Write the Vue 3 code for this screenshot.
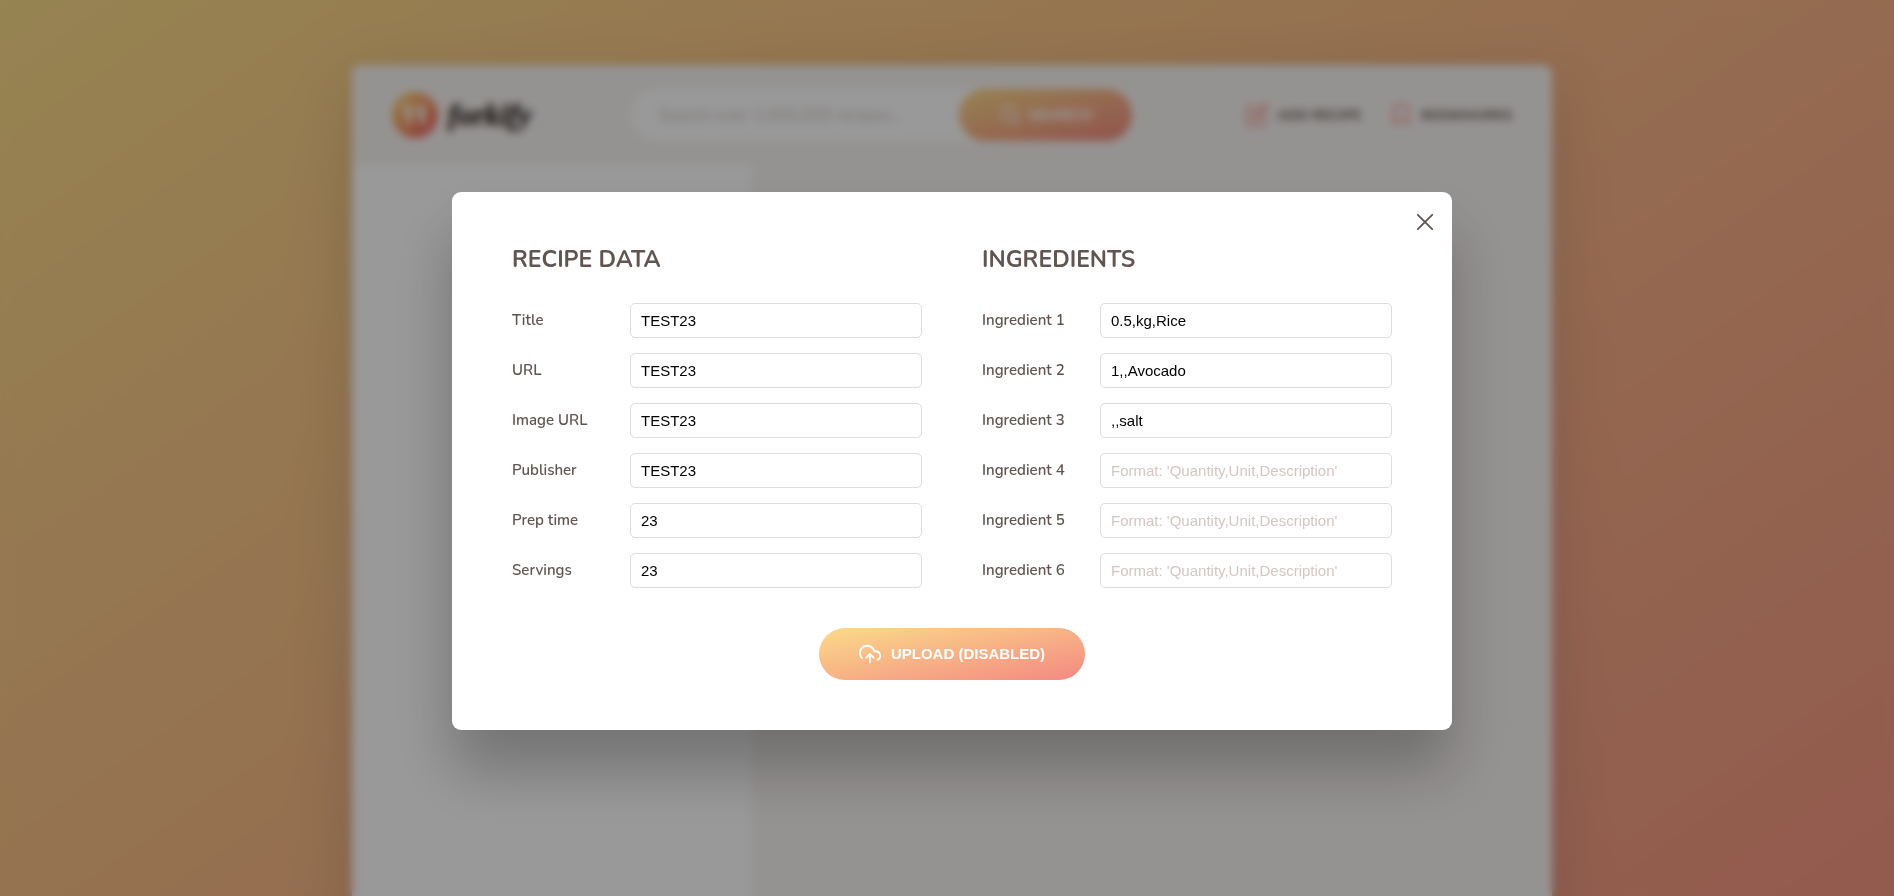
<script setup>
import { reactive, ref } from 'vue'

const query = ref('')

const recipeFields = reactive([
  { id: 'title', label: 'Title', value: 'TEST23' },
  { id: 'source-url', label: 'URL', value: 'TEST23' },
  { id: 'image', label: 'Image URL', value: 'TEST23' },
  { id: 'publisher', label: 'Publisher', value: 'TEST23' },
  { id: 'cooking-time', label: 'Prep time', value: '23' },
  { id: 'servings', label: 'Servings', value: '23' },
])

const ingredients = reactive(['0.5,kg,Rice', '1,,Avocado', ',,salt', '', '', ''])
</script>

<template>
  <div class="page">
    <div class="container">
      <header class="header">
        <a class="logo" href="#">
          <svg class="logo-mark" viewBox="0 0 46 46" aria-hidden="true">
            <defs>
              <linearGradient id="logo-gradient" x1="0" y1="0" x2="1" y2="1">
                <stop offset="0.1" stop-color="#fbd271" />
                <stop offset="0.85" stop-color="#f1665c" />
              </linearGradient>
            </defs>
            <circle cx="23" cy="23" r="23" fill="url(#logo-gradient)" />
            <path d="M12 12v7a5 5 0 0 0 3 4v10h4V23a5 5 0 0 0 3-4v-7h-2v7h-2v-7h-2v7h-2v-7zM33 12c-5 1-7 5-7 12h3v9h4z" fill="#fff" />
          </svg>
          <span class="wordmark">forkify</span>
        </a>

        <form class="search" @submit.prevent>
          <input v-model="query" class="search-field" type="text" aria-label="Search recipes" placeholder="Search over 1,000,000 recipes..." />
          <button class="btn btn-search" type="submit">
            <svg class="btn-icon" viewBox="0 0 24 24" aria-hidden="true">
              <circle cx="11" cy="11" r="8" />
              <path d="M21 21l-4.3-4.3" />
            </svg>
            <span>SEARCH</span>
          </button>
        </form>

        <nav class="nav">
          <button class="nav-btn" type="button">
            <svg class="nav-icon" viewBox="0 0 24 24" aria-hidden="true">
              <path d="M11 4H4a2 2 0 0 0-2 2v14a2 2 0 0 0 2 2h14a2 2 0 0 0 2-2v-7" />
              <path d="M18.5 2.5a2.1 2.1 0 0 1 3 3L12 15l-4 1 1-4z" />
            </svg>
            <span>ADD RECIPE</span>
          </button>
          <button class="nav-btn" type="button">
            <svg class="nav-icon" viewBox="0 0 24 24" aria-hidden="true">
              <path d="M19 21l-7-5-7 5V5a2 2 0 0 1 2-2h10a2 2 0 0 1 2 2z" />
            </svg>
            <span>BOOKMARKS</span>
          </button>
        </nav>
      </header>
      <aside class="results"></aside>
      <main class="recipe"></main>
    </div>

    <div class="overlay">
      <section class="window" role="dialog" aria-label="Add recipe">
        <button class="close" type="button" aria-label="Close">
          <svg viewBox="0 0 20 20" aria-hidden="true"><path d="M2 2l16 16M18 2L2 18" /></svg>
        </button>
        <form class="upload" @submit.prevent>
          <div class="column">
            <h3 class="heading">RECIPE DATA</h3>
            <div v-for="field in recipeFields" :key="field.id" class="row">
              <label :for="field.id">{{ field.label }}</label>
              <input :id="field.id" v-model="field.value" class="field" type="text" />
            </div>
          </div>
          <div class="column">
            <h3 class="heading">INGREDIENTS</h3>
            <div v-for="(item, i) in ingredients" :key="i" class="row">
              <label :for="`ingredient-${i + 1}`">Ingredient {{ i + 1 }}</label>
              <input
                :id="`ingredient-${i + 1}`"
                v-model="ingredients[i]"
                class="field"
                type="text"
                placeholder="Format: 'Quantity,Unit,Description'"
              />
            </div>
          </div>
          <button class="btn btn-upload" type="submit">
            <svg class="btn-icon" viewBox="0 0 24 24" aria-hidden="true">
              <path d="M16 16l-4-4-4 4" />
              <path d="M12 12v9" />
              <path d="M20.39 18.39A5 5 0 0 0 18 9h-1.26A8 8 0 1 0 3 16.3" />
            </svg>
            <span>UPLOAD (DISABLED)</span>
          </button>
        </form>
      </section>
    </div>
  </div>
</template>

<style scoped>
.page,
.page * {
  box-sizing: border-box;
}

/* The page behind an open dialog does not scroll. */
.page {
  height: 100vh;
  overflow: hidden;
  padding: 65px 0 0 10px;
  background: linear-gradient(to right bottom, #fbdb89, #f48982) 0 0 / 100% 1310px;
  color: #615551;
  font-family: Nunito, Lato, "Open Sans", sans-serif;
}

.container {
  display: grid;
  grid-template: 100px minmax(1070px, auto) / 1fr 2fr;
  max-width: 1200px;
  margin: 0 auto;
  overflow: hidden;
  border-radius: 9px;
  background: #fff;
  box-shadow: 0 20px 60px 5px rgba(97, 85, 81, 0.2);
}

.header {
  grid-column: 1 / -1;
  display: flex;
  align-items: center;
  justify-content: space-between;
  padding: 0 40px;
  background: #f9f5f3;
}

.recipe {
  background: #f9f5f3;
}

.logo {
  display: flex;
  align-items: center;
  gap: 10px;
  width: 126px;
  color: #3e3431;
  text-decoration: none;
}

.logo-mark {
  flex: none;
  width: 46px;
  height: 46px;
}

.wordmark {
  font-family: "Liberation Serif", "Times New Roman", serif;
  font-size: 30px;
  font-style: italic;
  font-weight: 700;
  line-height: 40px;
  -webkit-text-stroke: 1px currentColor;
}

.search {
  display: flex;
  align-items: center;
  padding-left: 28px;
  border-radius: 100px;
  background: #fff;
}

.search-field {
  width: 300px;
  padding: 0;
  border: none;
  background: none;
  color: inherit;
  font-family: inherit;
  font-size: 17px;
}

.search-field::placeholder,
.field::placeholder {
  color: #d3c7c3;
  opacity: 1;
}

.btn {
  display: flex;
  align-items: center;
  gap: 10px;
  padding: 15px 40px;
  border: none;
  border-radius: 100px;
  background: linear-gradient(to right bottom, #fbdb89, #f48982);
  color: #fff;
  font-family: "Liberation Sans", Arial, sans-serif;
  font-size: 15px;
  font-weight: 700;
  line-height: 22px;
}

.btn-search {
  gap: 8px;
}

.btn-icon {
  width: 22px;
  height: 22px;
  fill: none;
  stroke: currentColor;
  stroke-width: 2;
  stroke-linecap: round;
  stroke-linejoin: round;
}

.nav {
  display: flex;
  gap: 28px;
}

.nav-btn {
  display: flex;
  align-items: center;
  gap: 8px;
  padding: 0;
  border: none;
  background: none;
  color: inherit;
  font-family: inherit;
  font-size: 14px;
  font-weight: 700;
}

.nav-icon {
  width: 24px;
  height: 24px;
  fill: none;
  stroke: #f38e82;
  stroke-width: 2;
  stroke-linecap: round;
  stroke-linejoin: round;
}

.overlay {
  position: fixed;
  inset: 0;
  display: grid;
  place-items: center;
  padding: 25px 0 0 10px;
  background: rgba(0, 0, 0, 0.4);
  backdrop-filter: blur(4px);
}

.window {
  position: relative;
  width: 100%;
  max-width: 1000px;
  padding: 50px 60px;
  border-radius: 9px;
  background: #fff;
  box-shadow: 0 40px 60px rgba(0, 0, 0, 0.25);
}

.close {
  position: absolute;
  top: 21px;
  right: 18px;
  display: flex;
  padding: 0;
  border: none;
  background: none;
  color: inherit;
}

.close svg {
  width: 18px;
  height: 18px;
  fill: none;
  stroke: currentColor;
  stroke-width: 2;
  stroke-linecap: round;
}

.upload {
  display: grid;
  grid-template-columns: 1fr 1fr;
  gap: 40px 60px;
}

.column {
  display: grid;
  gap: 15px;
}

.heading {
  margin: 0 0 10px;
  font-size: 23px;
  font-weight: 700;
  line-height: 36px;
}

.row {
  display: grid;
  grid-template-columns: 1fr 292px;
  align-items: center;
  font-size: 15px;
  font-weight: 600;
}

.field {
  width: 100%;
  height: 35px;
  padding: 0 10px;
  border: 1px solid #ddd;
  border-radius: 5px;
  background: #fff;
  color: #000;
  font-family: "Liberation Sans", Arial, sans-serif;
  font-size: 15px;
}

.btn-upload {
  grid-column: 1 / -1;
  justify-self: center;
}
</style>
